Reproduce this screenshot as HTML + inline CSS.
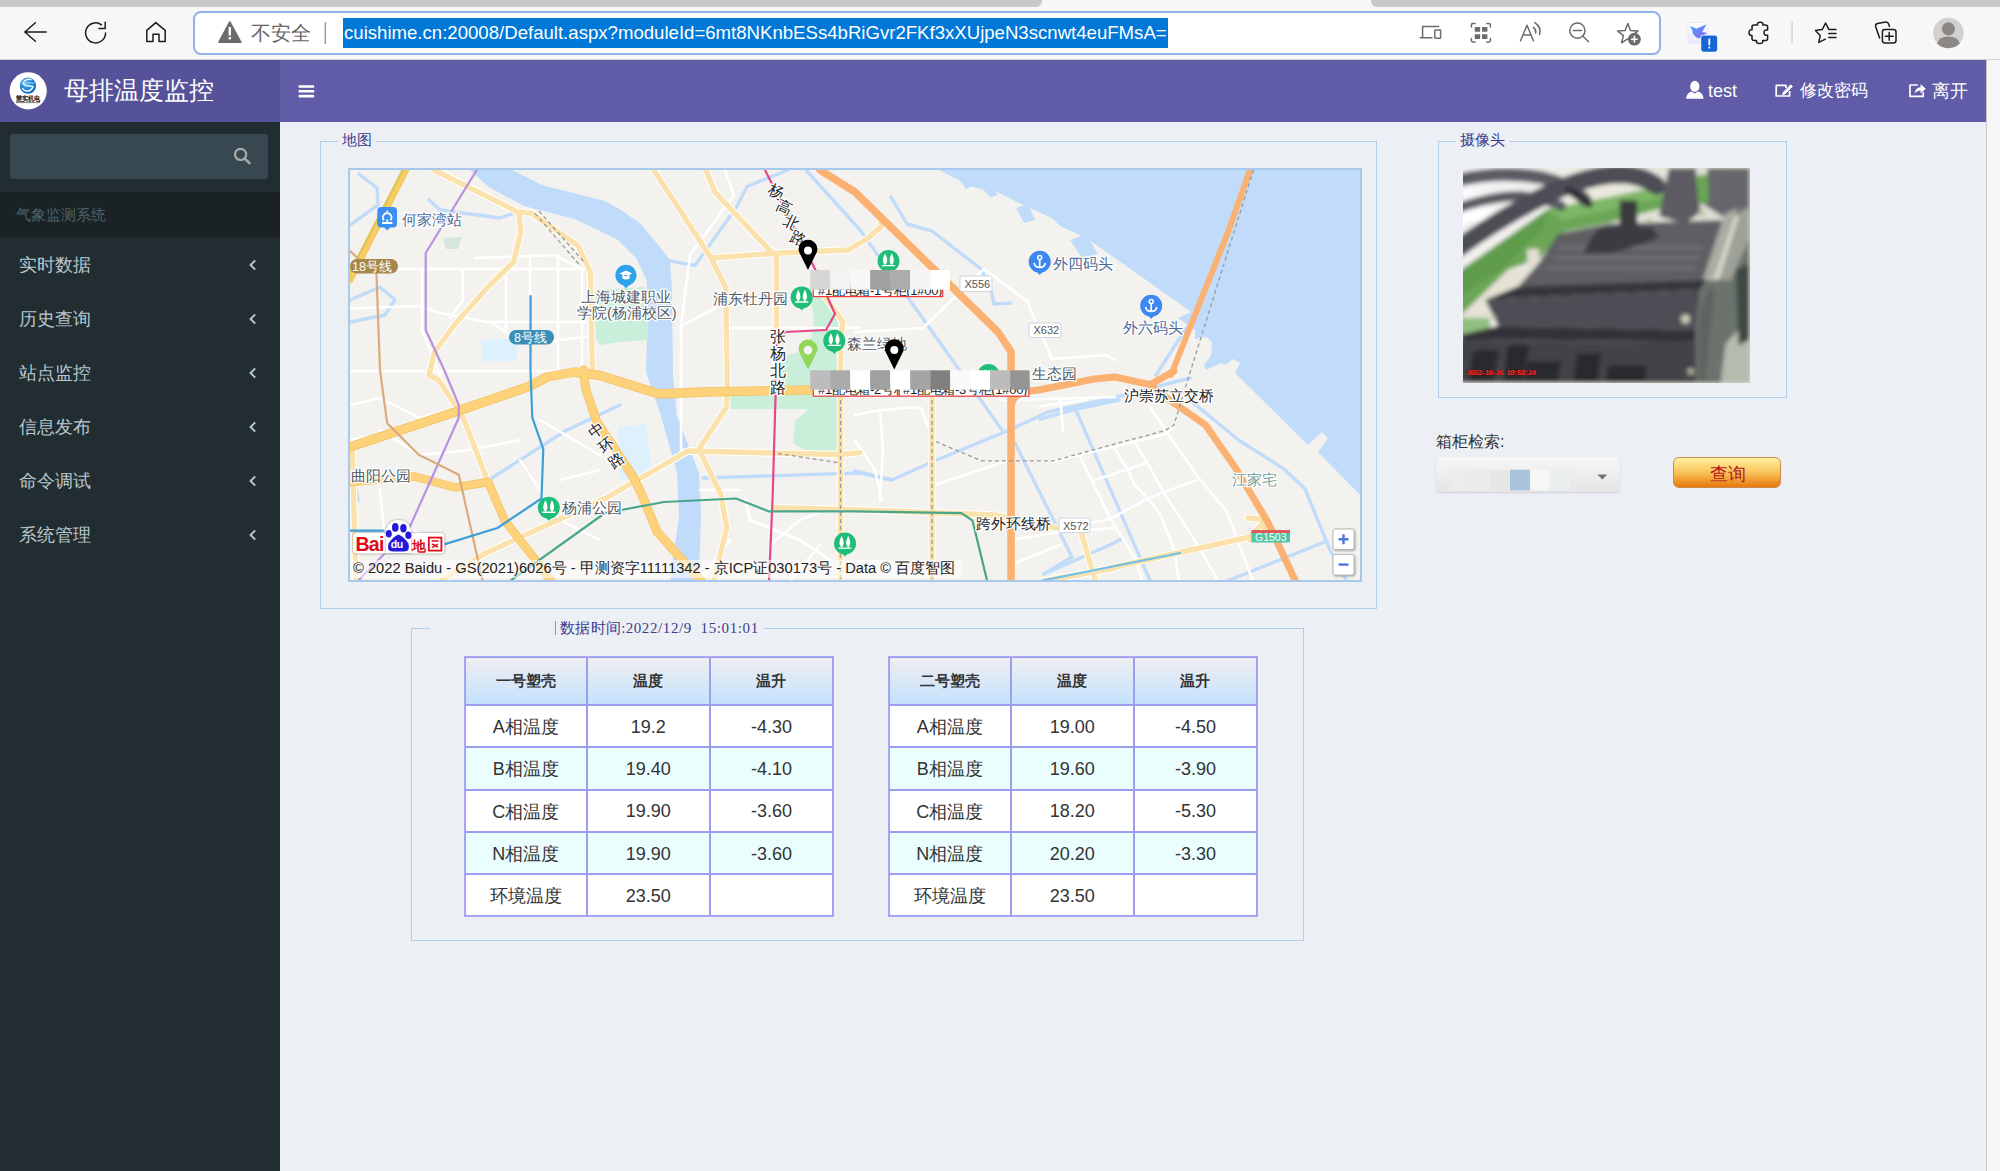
<!DOCTYPE html>
<html><head><meta charset="utf-8">
<style>
*{box-sizing:border-box}
html,body{margin:0;padding:0}
body{width:2000px;height:1171px;overflow:hidden;position:relative;background:#ecf0f5;font-family:"Liberation Sans",sans-serif;color:#333}
.abs{position:absolute}
/* browser chrome */
#tabs{left:0;top:0;width:2000px;height:8px;background:#f7f7f7}
#tab1{left:0;top:0;width:1042px;height:7px;background:#c9c9c9;border-bottom-right-radius:6px}
#tab2{left:1371px;top:0;width:629px;height:7px;background:#c9c9c9;border-bottom-left-radius:6px}
#toolbar{left:0;top:7px;width:2000px;height:53px;background:#f7f7f7}
#addr{left:193px;top:11px;width:1468px;height:44px;border:2.5px solid #8fb2e8;border-radius:8px;background:#fff}
#url{left:343px;top:18px;height:30px;background:#0078d7;color:#fff;font-size:18.6px;line-height:30px;white-space:nowrap;padding:0 1px}
.ico{position:absolute}
/* header */
#logo{left:0;top:60px;width:280px;height:62px;background:#555299}
#navbar{left:280px;top:60px;width:1706px;height:62px;background:#605ca8}
#rstrip{left:1986px;top:60px;width:14px;height:1111px;background:#f7f7f7;border-left:1.5px solid #c8c8c8}
/* sidebar */
#sidebar{left:0;top:122px;width:280px;height:1049px;background:#222d32}
#sform{left:10px;top:134px;width:258px;height:45px;background:#374850;border-radius:3px}
#shead{left:0;top:192px;width:280px;height:45px;background:#1a2226;color:#4b646f;font-size:15px;line-height:45px;padding-left:16px}
.mi{position:absolute;left:19px;width:250px;color:#b8c7ce;font-size:17.5px;height:30px;line-height:30px}
.mi svg{position:absolute;left:230px;top:9px}
/* content */
fieldset{position:absolute;margin:0;padding:0;border:1.25px solid #b3cdf0}
.legend{position:absolute;font-family:"Liberation Serif",serif;color:#3c3c8c;background:#ecf0f5;font-size:15px;line-height:17px}
table.t{position:absolute;border-collapse:separate;border-spacing:0;border:1.25px solid #a9a9f5;table-layout:fixed}
table.t td{border:1.25px solid #9c9cf0;text-align:center;font-size:18px;color:#333;padding:2px 0 0 0;height:42.3px}
table.t tr.h td{background:linear-gradient(#f0eef3,#c3e2fb);font-weight:bold;font-size:14.8px;height:48px;padding:1px 0 0 0}
table.t tr.w td{background:#fff}
table.t tr.c td{background:#ebfefe}
</style></head><body>
<!-- browser chrome -->
<div class="abs" id="tabs"></div>
<div class="abs" id="tab1"></div>
<div class="abs" id="tab2"></div>
<div class="abs" id="toolbar"></div>
<div class="abs" style="left:0;top:59px;width:2000px;height:1px;background:#d6d4ce"></div>
<div class="abs" id="addr"></div>

<svg class="abs" style="left:0;top:0" width="2000" height="60" viewBox="0 0 2000 60">
 <g fill="none" stroke="#1c1c1c" stroke-width="1.5" stroke-linecap="round" stroke-linejoin="round">
  <path d="M35.4 22.8 L24.8 32 L35.4 41.2 M24.8 32 H46.2"/>
  <path d="M105.6 33 A10 10 0 1 1 101.5 24.8"/>
  <path d="M105.2 22.2 V28.6 H99"/>
  <path d="M155.8 22.6 L146.8 30.4 V41.6 H153 V34.2 H159 V41.6 H165.2 V30.4 Z"/>
 </g>
 <g fill="#6b6b6b" stroke="none">
  <path d="M219 42.2 L229.8 22 L240.8 42.2 Z" stroke="#6b6b6b" stroke-width="1.6" stroke-linejoin="round"/>
 </g>
 <rect x="228.6" y="27" width="2.4" height="8.5" fill="#fff"/>
 <rect x="228.6" y="37" width="2.4" height="2.4" fill="#fff"/>
 <rect x="324.6" y="22" width="1.5" height="22" fill="#9a9a9a"/>
 <g fill="none" stroke="#6b6b6b" stroke-width="1.5" stroke-linecap="round" stroke-linejoin="round">
  <path d="M1438.6 26.4 H1422.6 V37.4 M1420.4 37.8 H1432"/>
  <rect x="1434.8" y="30" width="5.8" height="8.2" rx="0.6"/>
  <path d="M1471.4 27 V24.8 Q1471.4 23.4 1472.8 23.4 H1475 M1486.8 23.4 H1489 Q1490.4 23.4 1490.4 24.8 V27 M1490.4 38.6 V40.6 Q1490.4 42 1489 42 H1486.8 M1475 42 H1472.8 Q1471.4 42 1471.4 40.6 V38.6"/>
  <path d="M1520.6 40.8 L1527 25.2 L1533.4 40.8 M1522.6 35 H1531.4"/>
  <path d="M1533.4 27.4 Q1536.6 30 1535.6 33 M1534.8 22.6 Q1541.6 27 1539.6 34.6"/>
  <circle cx="1577.4" cy="30.6" r="7.6"/>
  <path d="M1573.4 30.6 H1581.4 M1583 36.2 L1588.6 41.8"/>
  <path d="M1627.8 23.4 L1630.5 30.5 L1638.1 30.9 L1632.2 35.6 L1634.1 42.9 L1627.8 38.8 L1621.5 42.9 L1623.4 35.6 L1617.5 30.9 L1625.1 30.5 Z"/>
 </g>
 <g fill="#6b6b6b">
  <rect x="1474.8" y="27" width="5.4" height="4.8" rx="0.6"/><rect x="1482" y="27" width="5.4" height="4.8" rx="0.6"/>
  <rect x="1474.8" y="34.2" width="5.4" height="4.8" rx="0.6"/><rect x="1482" y="34.2" width="5.4" height="4.8" rx="0.6"/>
  <circle cx="1634.4" cy="39.2" r="6.4"/>
 </g>
 <path d="M1634.4 35.8 V42.6 M1631 39.2 H1637.8" stroke="#fff" stroke-width="1.6"/>
 <!-- extensions -->
 <defs><linearGradient id="brd" x1="0" y1="0" x2="1" y2="1"><stop offset="0" stop-color="#45a8fa"/><stop offset="1" stop-color="#8d62f4"/></linearGradient>
 <linearGradient id="sqb" x1="0" y1="0" x2="0" y2="1"><stop offset="0" stop-color="#ffffff"/><stop offset="1" stop-color="#e6e9fa"/></linearGradient></defs>
 <rect x="1688" y="22.6" width="20" height="20.8" rx="2.2" fill="url(#sqb)" stroke="#e3e6ef" stroke-width="0.8"/>
 <path d="M1689.2 26.3 Q1693 26.6 1696.4 28.7 L1706.6 24.2 L1702.2 32.1 L1707.3 33.1 Q1703 35 1699.1 38.6 Q1692.4 36.4 1692.3 30.6 Q1691.4 27.8 1689.2 26.3 Z" fill="url(#brd)"/>
 <rect x="1700.6" y="34.8" width="17.2" height="17.4" rx="3" fill="#ffffff"/>
 <rect x="1701.2" y="35.4" width="16" height="16.4" rx="2.4" fill="#1766d6"/>
 <rect x="1708.4" y="38.6" width="1.8" height="6.6" fill="#fff"/><rect x="1708.4" y="46.6" width="1.8" height="1.8" fill="#fff"/>
 <g fill="none" stroke="#1c1c1c" stroke-width="1.5" stroke-linejoin="round" stroke-linecap="round">
  <path d="M1752 27 Q1752 25 1754 25 H1757.6 Q1756.6 22.2 1760.2 22.2 Q1763.8 22.2 1762.8 25 H1765.6 Q1767.6 25 1767.6 27 V30 Q1764 29.4 1764 32.6 Q1764 35.8 1767.6 35.2 V38.6 Q1767.6 40.6 1765.6 40.6 H1762.6 Q1763.6 43.4 1759.6 43.4 Q1755.6 43.4 1756.6 40.6 H1754 Q1752 40.6 1752 38.6 V35.4 Q1749 35.8 1749 32.6 Q1749 29.4 1752 29.8 Z"/>
  <path d="M1836 29.4 H1828.8 L1825.6 23 L1822.2 29.6 L1815.4 30.4 L1820.2 35.6 L1818.8 42.4 L1825.4 39.2"/>
  <path d="M1828.8 33.6 H1836 M1828.8 37.6 H1836"/>
  <path d="M1879.6 38 L1875.6 26.4 Q1875.2 24 1877.6 23.4 L1885.6 22 Q1888 21.8 1888.8 24.2 L1889.4 26.4"/>
  <rect x="1882.4" y="29.4" width="13.6" height="13.6" rx="2.4"/>
  <path d="M1889.2 32.4 V40.2 M1885.2 36.2 H1893.2"/>
 </g>
 <rect x="1791.4" y="21.8" width="1.4" height="21.6" fill="#d0d0d0"/>
 <circle cx="1948.4" cy="33" r="15.2" fill="#d1d0ce"/>
 <circle cx="1948.4" cy="28.8" r="6.6" fill="#8b8784"/>
 <path d="M1937 43.6 Q1939 36.6 1948.4 36.6 Q1957.8 36.6 1959.8 43.6 Q1955 48.2 1948.4 48.2 Q1941.8 48.2 1937 43.6 Z" fill="#8b8784"/>
</svg>
<div class="abs" style="left:251px;top:19px;font-size:19.5px;color:#666;line-height:28px">不安全</div>
<div class="abs" id="url">cuishime.cn:20008/Default.aspx?moduleId=6mt8NKnbESs4bRiGvr2FKf3xXUjpeN3scnwt4euFMsA=</div>

<!-- header -->
<div class="abs" id="logo"></div>
<div class="abs" id="navbar"></div>
<div class="abs" id="rstrip"></div>
<svg class="abs" style="left:0;top:60px" width="1986" height="62" viewBox="0 60 1986 62">
 <defs><radialGradient id="glb" cx="0.4" cy="0.35" r="0.7"><stop offset="0" stop-color="#56b6f2"/><stop offset="0.6" stop-color="#1f7fd2"/><stop offset="1" stop-color="#1a5fb8"/></radialGradient></defs>
 <circle cx="28.2" cy="90.8" r="18.6" fill="#fff"/>
 <circle cx="28" cy="85.7" r="8.1" fill="url(#glb)"/>
 <path d="M31.6 79.6 Q26 78.6 23.6 82 Q22.4 84.6 26 85.6 L33 86.6 Q31 91.6 26 91 Q23 90.4 22.6 88" fill="none" stroke="#e8f6ff" stroke-width="1.5"/>
 <path d="M21 84 Q27 82.4 34.6 83" fill="none" stroke="#bfe6ff" stroke-width="0.8"/>
 <text x="15.7" y="101.2" font-size="7.2" font-weight="bold" fill="#1a1a1a" textLength="24.7" lengthAdjust="spacingAndGlyphs">慧实机电</text>
 <rect x="16" y="102.2" width="24" height="0.9" fill="#777"/>
 <g fill="#fff">
  <rect x="298.6" y="85.2" width="15.6" height="2.6" rx="0.6"/>
  <rect x="298.6" y="90" width="15.6" height="2.6" rx="0.6"/>
  <rect x="298.6" y="94.8" width="15.6" height="2.6" rx="0.6"/>
 </g>
 <g fill="#fff">
  <ellipse cx="1694.8" cy="86.4" rx="4.6" ry="5.6"/>
  <path d="M1686 98.8 Q1686.4 93 1691.4 91.4 L1694.8 93.6 L1698.2 91.4 Q1703.2 93 1703.6 98.8 Z"/>
 </g>
 <g fill="none" stroke="#fff" stroke-width="1.7" stroke-linejoin="round">
  <path d="M1786 88 V85.4 H1776.2 V96 H1789.6 V91"/>
  <path d="M1783.2 92.4 L1790.8 84.8 L1792.4 86.4 L1784.8 94 L1782.6 94.6 Z" fill="#fff" stroke-width="1"/>
  <path d="M1917.8 85 H1910 V96.4 H1923.2 V92.2"/>
 </g>
 <path d="M1914.6 93.6 Q1915.2 87.4 1920.6 87.2 V84 L1925.8 88.8 L1920.6 93.4 V90.4 Q1916.6 90.6 1914.6 93.6 Z" fill="#fff"/>
</svg>
<div class="abs" style="left:64px;top:74px;font-size:24.5px;color:#fff;line-height:34px">母排温度监控</div>
<div class="abs" style="left:1708px;top:78px;font-size:18px;color:#fff;line-height:26px">test</div>
<div class="abs" style="left:1800px;top:78px;font-size:17px;color:#fff;line-height:26px">修改密码</div>
<div class="abs" style="left:1932px;top:78px;font-size:17.5px;color:#fff;line-height:26px">离开</div>

<!-- sidebar -->
<div class="abs" id="sidebar"></div>
<div class="abs" id="sform"></div>
<svg class="abs" style="left:230px;top:144px" width="24" height="24" viewBox="230 144 24 24">
 <circle cx="240.6" cy="154.4" r="5.6" fill="none" stroke="#a9a9a6" stroke-width="2.2"/>
 <path d="M244.6 158.4 L249.4 163.2" stroke="#a9a9a6" stroke-width="2.6" stroke-linecap="round"/>
</svg>
<div class="abs" id="shead">气象监测系统</div>
<div class="mi" style="top:250px">实时数据<svg width="8" height="12" viewBox="0 0 8 12"><path d="M6.2 1.4 L1.6 6 L6.2 10.6" fill="none" stroke="#b8c7ce" stroke-width="2"/></svg></div>
<div class="mi" style="top:304px">历史查询<svg width="8" height="12" viewBox="0 0 8 12"><path d="M6.2 1.4 L1.6 6 L6.2 10.6" fill="none" stroke="#b8c7ce" stroke-width="2"/></svg></div>
<div class="mi" style="top:358px">站点监控<svg width="8" height="12" viewBox="0 0 8 12"><path d="M6.2 1.4 L1.6 6 L6.2 10.6" fill="none" stroke="#b8c7ce" stroke-width="2"/></svg></div>
<div class="mi" style="top:412px">信息发布<svg width="8" height="12" viewBox="0 0 8 12"><path d="M6.2 1.4 L1.6 6 L6.2 10.6" fill="none" stroke="#b8c7ce" stroke-width="2"/></svg></div>
<div class="mi" style="top:466px">命令调试<svg width="8" height="12" viewBox="0 0 8 12"><path d="M6.2 1.4 L1.6 6 L6.2 10.6" fill="none" stroke="#b8c7ce" stroke-width="2"/></svg></div>
<div class="mi" style="top:520px">系统管理<svg width="8" height="12" viewBox="0 0 8 12"><path d="M6.2 1.4 L1.6 6 L6.2 10.6" fill="none" stroke="#b8c7ce" stroke-width="2"/></svg></div>

<!-- content -->
<fieldset style="left:320px;top:141px;width:1057px;height:468px"></fieldset>
<div class="legend" style="left:338px;top:132px;padding:0 4px">地图</div>
<div class="abs" style="left:348px;top:168px;width:1014px;height:414px;border:2px solid #a9c8ee;background:#f3f1ed;overflow:hidden" id="map">
<svg style="position:absolute;left:0;top:0" width="1010" height="410" viewBox="350 170 1010 410" font-family="Liberation Sans, sans-serif">
<rect x="350" y="170" width="1010" height="410" fill="#f4f2ee"/>
<!-- sea -->
<path fill="#c0dcfa" d="M939 170 H1360 V495 L1318 452 L1328 438 L1322 432 L1308 445 L1235 373 L1240 363 L1233 359 L1226 365 L1221 363 L1206 370 L1204 365 L1211 355 L1212 342 L1206 337 L1195 339 L1195 330 L1178 318 L1191 312 L1115 258 L1086 238 L1060 226 L1052 218 L1025 206 L997 192 L985 190 L970 186 Z"/>
<g fill="#c0dcfa">
 <path d="M957 176 L965 174 L973 186 L966 189 Z"/>
 <path d="M980 186 L990 184 L998 195 L990 197 Z"/>
 <path d="M1016 208 L1028 204 L1035 220 L1024 223 Z"/>
 <path d="M1070 240 L1086 234 L1098 254 L1082 258 Z"/>
</g>
<!-- river -->
<path fill="#c0dcfa" d="M470 170 L512 170 L542 185 L605 201 L621 210 L641 224 L659 246 L670 260 L672 290 L673 375 L677 416 L699 473 L701 513 L699 581 L670 581 L679 517 L677 473 L661 416 L646 372 L648 308 L646.6 280 L636 258 L618 240 L600 231 L574.5 219 L531.5 208 L524 206 L488 186.5 Z"/>
<path fill="#dcf1fc" d="M618 427 L646 424 L652 470 L640 482 L620 478 Z"/>
<path fill="#dcf1fc" d="M481 339 L517 339 L517 361 L481 361 Z"/>
<!-- parks -->
<g fill="#c9eed9">
 <path d="M592 290 L645 287 L648 340 L620 342 L600 345 L592 335 Z"/>
 <path d="M811 297 L827 297 L838 323 L840 453 L809 453 L793 443 L795 421 L809 409 L730 409 L730 396 L780 390 L780 357 L808 350 L814 323 Z"/>
 <path d="M443 238 L462 237 L458 249 L446 249 Z" fill="#d5e6de"/>
</g>
<!-- canals -->
<g fill="none" stroke="#c0dcfa" stroke-width="3.4" stroke-linejoin="round" stroke-linecap="round">
 <path d="M703 478 L860 473 L892 480 L932 462 L1007 431 L1048 412 L1115 397.5 L1190 378"/>
 <path d="M860 230 L806 170 M860 230 L1002 430 M1015 443 L1072 557 L1044 574"/>
 <path d="M891 197 L907 224 L932 231 L981 269 L991 290 L994 304 L1011 303"/>
 <path d="M788 170 L747 186.5 L736 208 L695 265.4 L654 258"/>
 <path d="M1191 401 L1238.5 440 L1284 469 L1305 489 L1330 550 L1347 581"/>
 <path d="M1156 375 L1185 330 L1195 318"/>
 <path d="M1044 574 L1115 542.6 L1121 539"/>
 <path d="M1227 581 L1327 541"/>
 <path d="M1076.3 411 L1150.5 581.6"/>
 <path d="M1040 419 L1074.7 409.5 L1119 400"/>
 <path d="M492 478 L565 431 L620 405"/>
 <path d="M359 174 L377 188 L378 205 L350 225"/>
 <path d="M429 200 L440 210 L500 218 L520 211"/>
 <path d="M350 460 L358 500"/>
 <path d="M350 300 L380 287 L395 300 L385 315 L350 322"/>
 <path d="M855 471 L892 480"/>
</g>
<!-- white minor roads -->
<g fill="none" stroke="#ffffff" stroke-width="2.6" stroke-linejoin="round" stroke-linecap="round">
 <path d="M350 269 L592 269 M350 308.5 L420 306 L436 312 L486 322 L592 322 M350 371 L592 371"/>
 <path d="M422 269 L422 330 L440 375 M463 269 L463 300 L450 318 M506 277 L506 330 M558 255 L558 375 M582 269 L582 375 M530 257 L530 296"/>
 <path d="M475 258 L555 255 L580 268"/>
 <path d="M491 322 L520 342 L545 342 L592 336"/>
 <path d="M725 170 L734 195 L690 255 L681 326 L681 375 L681 450 M681 326 L716 308 M730 328 L860 328"/>
 <path d="M984 269 L1027 301 L1052 359 L1106 355 L1115 360 M984 269 L923 328 L855 332"/>
 <path d="M350 405 L380 398 L420 418 L462 406 L510 390 M350 440 L380 435 M380 430 L420 455 L470 450 L520 440"/>
 <path d="M395 520 L430 540 M380 490 L385 540 M520 460 L560 520 L600 540 M540 420 L600 455 M560 480 L600 470"/>
 <path d="M681 450 L699 449 M700 490 L740 490 M745 498 L750 520 L800 540 L830 560 M770 545 L800 520 L840 505 M790 581 L820 545 M730 540 L700 581"/>
 <path d="M855 415 L880 410 L920 407 L935 441 M880 410 L883 450 L880 500 M855 440 L875 470 L882 500 M1000 400 L1050 399 L1115 397"/>
 <path d="M1010 540 L1060 532 L1115 528 M1010 565 L1060 545 M935 485 L980 470 L1010 460"/>
 <path d="M1052.6 461.6 L1166.3 434 L1174 427"/>
 <path d="M1079.5 455.3 L1109.5 516.9 L1134.8 557.9 L1142.7 581.6"/>
 <path d="M1114.2 447.4 L1128.4 471 L1134.8 485.3 L1147.4 497.9 L1160 513.7 L1174.2 550 L1179 581.6"/>
 <path d="M1134.8 442.6 L1147.4 463.2 L1163.2 491.6 L1197.9 545.3 L1218.5 581.6"/>
 <path d="M1147.4 403.2 L1166.3 431.6 L1199.5 479 L1226.4 510.6 L1253.2 581.6"/>
 <path d="M1093.7 480.5 L1145.8 463.2 M1090.5 523.2 L1111 518.4 L1149 497.9 L1199.5 479"/>
 <path d="M1060.5 400 L1063 431.6 M1040 406.3 L1087.4 400"/>
</g>
<!-- pale casing -->
<g fill="none" stroke-linejoin="round" stroke-linecap="round">
 <g stroke="#ffffff" stroke-width="7.4">
  <path d="M434 170 L517 211.6 L531.5 213.4 L578 245.7 L590.6 272.6 L592.4 375"/>
  <path d="M519 213 L520.7 233 L513.5 262 L488 287 L456 323 L434.7 351.5 L429 375 L438.6 380 L462.5 416 L488 482"/>
  <path d="M653.8 170 L711 258 L725.5 287 L727.3 375 L726.7 406.7 L699 449 L721 495 L726.7 528 L713.8 581"/>
  <path d="M705.8 170 L714.8 192 L770.3 251 M711 258 L780 253 L848 250 L867 239 L882 226 L880 218"/>
  <path d="M776.6 256 L776.6 390"/>
  <path d="M822 292 L843 322 L840.5 340 L840.5 581"/>
  <path d="M932 392 L932 581"/>
  <path d="M440 581 L484.5 553.6 L605 498.5 L688 451 L838.7 454.5 L860 452.6"/>
  <path d="M774 507.7 L855 509.6 L994.6 515 L1057 528"/>
  <path d="M1110 568 L1249.6 537 L1264 522 M1044 581 L1115 568"/>
  <path d="M1081 531.6 L1095.5 581"/>
  <path d="M352.3 450.8 L356 581"/>
  <path d="M1248 518 L1268 520 L1262 536 L1250 540"/>
 </g>
</g>
<!-- pale yellow roads -->
<g fill="none" stroke-linejoin="round" stroke-linecap="round">
 <g stroke="#fbe2ad" stroke-width="5.4">
  <path d="M434 170 L517 211.6 L531.5 213.4 L578 245.7 L590.6 272.6 L592.4 375"/>
  <path d="M519 213 L520.7 233 L513.5 262 L488 287 L456 323 L434.7 351.5 L429 375 L438.6 380 L462.5 416 L488 482"/>
  <path d="M653.8 170 L711 258 L725.5 287 L727.3 375 L726.7 406.7 L699 449 L721 495 L726.7 528 L713.8 581"/>
  <path d="M705.8 170 L714.8 192 L770.3 251 M711 258 L780 253 L848 250 L867 239 L882 226 L880 218"/>
  <path d="M776.6 256 L776.6 390"/>
  <path d="M822 292 L843 322 L840.5 340 L840.5 581"/>
  <path d="M932 392 L932 581"/>
  <path d="M440 581 L484.5 553.6 L605 498.5 L688 451 L838.7 454.5 L860 452.6"/>
  <path d="M774 507.7 L855 509.6 L994.6 515 L1057 528"/>
  <path d="M1110 568 L1249.6 537 L1264 522 M1044 581 L1115 568"/>
  <path d="M1081 531.6 L1095.5 581"/>
  <path d="M352.3 450.8 L356 581"/>
  <path d="M1248 518 L1268 520 L1262 536 L1250 540"/>
 </g>
</g>
<!-- main casing -->
<g fill="none" stroke="#f3c15e" stroke-linejoin="round" stroke-linecap="round">
 <path stroke-width="9.4" d="M350 447 L455 412 L529 386.5 L547 377 L574.5 372 L600 375.5 L659 394 L703 392 L811 390 L1012 390"/>
 <path stroke-width="8.9" d="M583.7 370 L585.5 388.4 L596.6 421.4 L633 476.5 L642 495 L657 531.6 L701 581"/>
 <path stroke-width="8.4" d="M350 482 L414.8 476.5 L455 487.5 L488.2 482 L504.7 520.6 L537.8 562.8 L551 581"/>
 <path stroke-width="6.4" d="M406 170 L350 280"/>
 <path stroke-width="2.8" d="M403 170 L348 277"/>
</g>
<!-- main yellow roads -->
<g fill="none" stroke="#fdd27b" stroke-linejoin="round" stroke-linecap="round">
 <path stroke-width="8" d="M350 447 L455 412 L529 386.5 L547 377 L574.5 372 L600 375.5 L659 394 L703 392 L811 390 L1012 390"/>
 <path stroke-width="7.5" d="M583.7 370 L585.5 388.4 L596.6 421.4 L633 476.5 L642 495 L657 531.6 L701 581"/>
 <path stroke-width="7" d="M350 482 L414.8 476.5 L455 487.5 L488.2 482 L504.7 520.6 L537.8 562.8 L551 581"/>
 <path stroke-width="5" d="M406 170 L350 280" stroke="#f7cd62"/>
 <path stroke-width="1.4" d="M403 170 L348 277" stroke="#d2c552"/>
</g>
<!-- orange expressways -->
<g fill="none" stroke="#fbb172" stroke-linejoin="round" stroke-linecap="round">
 <path stroke-width="7.6" d="M820 170 L855 192 L998 332 L1011 351.5 L1011 581"/>
 <path stroke-width="7" d="M1012 403 Q1014 392 1038.6 390 L1094 379 L1115 377 L1150 384.7 L1174 371"/>
 <path stroke-width="6" d="M1171 375 L1228.3 231.3 L1250 170"/>
 <path stroke-width="7" d="M1150 384.7 L1168.8 399.4 L1205.5 425 L1235 467.3 L1268 522.4 L1295.5 581"/>
</g>
<!-- dashed rail -->
<g fill="none" stroke="#9a9a9a" stroke-width="1.3" stroke-dasharray="4 3">
 <path d="M535 213.4 L580 265.4 M539 211 L584 262"/>
 <path d="M935.8 441.6 L981.7 460.9 L1053.3 460.9 L1110 445.3 L1165 430.6 L1174 425 L1190.8 370 L1253.4 170"/>
 <path d="M840.5 400 L840.5 581 M932 400 L932 581"/>
 <path d="M778 453.5 L838.7 462.7"/>
</g>
<!-- metro lines -->
<g fill="none" stroke-width="2.2" stroke-linejoin="round" stroke-linecap="round">
 <path stroke="#b991e2" d="M476.8 170 L425.7 253 L425.7 330 L444.2 370 L458.8 405 L458.8 417.7 L409.3 528 L357.9 581"/>
 <path stroke="#d9ab7c" d="M376.4 272.6 L380 370 L387.2 423.3 L418.4 454.5 L458.8 474.7 L482.7 581"/>
 <path stroke="#d9ab7c" d="M350 251 L362 262"/>
 <path stroke="#3d9fd8" d="M530.6 296 L530.5 370 L532.3 417.7 L543.3 449 L541.5 498.5 L497.4 528 L444.2 544.4 M350.5 530.7 L383.6 530.7"/>
 <path stroke="#e2488a" d="M765 170 L815 269 L835 314 L826 330 L785 332 L777.5 339 L776.3 370 L772.6 498.5 L769 581"/>
 <path stroke="#4aa68b" d="M510 581 L605 513 L664 502 L736 498.5 L769 511.4 L855 511.4 L961.5 513.2 L972.5 520.6 L987.2 581"/>
 <path stroke="#70c0ea" d="M1040 581 L1180 553"/>
</g>
<!-- badges -->
<rect x="350" y="259" width="48" height="14.5" rx="7" fill="#a88749"/>
<text x="352" y="271" font-size="12.5" fill="#fff">18号线</text>
<rect x="509" y="330" width="45" height="14.5" rx="7" fill="#3a8fb7"/>
<text x="514" y="342" font-size="12.5" fill="#fff">8号线</text>
<g font-size="11" fill="#555">
 <rect x="960" y="276" width="32" height="15.5" rx="2" fill="#fff" stroke="#cdd5e0" stroke-width="1"/>
 <text x="964.5" y="287.8">X556</text>
 <rect x="1029" y="323" width="32" height="14.5" rx="2" fill="#fff" stroke="#cdd5e0" stroke-width="1"/>
 <text x="1033.5" y="334.4">X632</text>
 <rect x="1059" y="518" width="31" height="14.5" rx="2" fill="#fff" stroke="#cdd5e0" stroke-width="1"/>
 <text x="1063" y="529.6">X572</text>
</g>
<rect x="1251.4" y="530" width="38.6" height="12.6" rx="1.5" fill="#4cc5a5"/>
<rect x="1251.4" y="530" width="38.6" height="3" fill="#e05a5a"/>
<text x="1255" y="541.4" font-size="10.5" fill="#fff">G1503</text>
<!-- POI icons -->
<g>
 <rect x="377.3" y="207" width="19.7" height="20.6" rx="4" fill="#3b8ef2"/>
 <path d="M384 227 L387.2 230.6 L390.4 227 Z" fill="#3b8ef2"/>
 <path d="M384 220.4 A4.3 4.3 0 1 1 390.4 220.4 M387.2 219.6 V222.6 M382 223 H392.4" stroke="#fff" stroke-width="1.8" fill="none"/><circle cx="387.2" cy="211.6" r="1" fill="#fff"/>
 <circle cx="626" cy="275.3" r="10.6" fill="#2fa3ea"/>
 <path d="M622.6 284.6 L626 288.6 L629.4 284.6 Z" fill="#2fa3ea"/>
 <path d="M619.6 273.4 L626 270.4 L632.4 273.4 L626 276.4 Z M622.4 275.2 V278.4 Q626 280.4 629.6 278.4 V275.2" fill="#fff"/>
</g>
<g id="parkicons">
 <g transform="translate(888.5 261)"><circle r="11" fill="#1fbd78"/><path d="M-3 9.6 L0 13.2 L3 9.6 Z" fill="#1fbd78"/><path d="M-3.4 -6 Q-6.4 0 -3.4 3 Q-0.6 0 -3.4 -6 Z M3.2 -6 Q0.4 0 3.2 3 Q6 0 3.2 -6 Z M-6.6 4.6 H6.6" fill="#fff" stroke="#fff" stroke-width="1.4"/></g>
 <g transform="translate(801.7 297.4)"><circle r="11" fill="#1fbd78"/><path d="M-3 9.6 L0 13.2 L3 9.6 Z" fill="#1fbd78"/><path d="M-3.4 -6 Q-6.4 0 -3.4 3 Q-0.6 0 -3.4 -6 Z M3.2 -6 Q0.4 0 3.2 3 Q6 0 3.2 -6 Z M-6.6 4.6 H6.6" fill="#fff" stroke="#fff" stroke-width="1.4"/></g>
 <g transform="translate(834.3 340.8)"><circle r="11" fill="#1fbd78"/><path d="M-3 9.6 L0 13.2 L3 9.6 Z" fill="#1fbd78"/><path d="M-3.4 -6 Q-6.4 0 -3.4 3 Q-0.6 0 -3.4 -6 Z M3.2 -6 Q0.4 0 3.2 3 Q6 0 3.2 -6 Z M-6.6 4.6 H6.6" fill="#fff" stroke="#fff" stroke-width="1.4"/></g>
 <g transform="translate(988.5 375)"><circle r="11" fill="#1fbd78"/><path d="M-3.4 -6 Q-6.4 0 -3.4 3 Q-0.6 0 -3.4 -6 Z M3.2 -6 Q0.4 0 3.2 3 Q6 0 3.2 -6 Z" fill="#fff"/></g>
 <g transform="translate(548.8 507.7)"><circle r="11" fill="#1fbd78"/><path d="M-3 9.6 L0 13.2 L3 9.6 Z" fill="#1fbd78"/><path d="M-3.4 -6 Q-6.4 0 -3.4 3 Q-0.6 0 -3.4 -6 Z M3.2 -6 Q0.4 0 3.2 3 Q6 0 3.2 -6 Z M-6.6 4.6 H6.6" fill="#fff" stroke="#fff" stroke-width="1.4"/></g>
 <g transform="translate(845 543.5)"><circle r="11" fill="#1fbd78"/><path d="M-3 9.6 L0 13.2 L3 9.6 Z" fill="#1fbd78"/><path d="M-3.4 -6 Q-6.4 0 -3.4 3 Q-0.6 0 -3.4 -6 Z M3.2 -6 Q0.4 0 3.2 3 Q6 0 3.2 -6 Z M-6.6 4.6 H6.6" fill="#fff" stroke="#fff" stroke-width="1.4"/></g>
</g>
<g>
 <g transform="translate(1039.7 261.8)"><circle r="11" fill="#3c87f0"/><path d="M-3 9.6 L0 13.2 L3 9.6 Z" fill="#3c87f0"/><circle cy="-4.4" r="2" fill="none" stroke="#fff" stroke-width="1.5"/><path d="M0 -2.4 V5.6 M-5.6 1 Q-5 5.6 0 5.6 Q5 5.6 5.6 1" fill="none" stroke="#fff" stroke-width="1.7"/></g>
 <g transform="translate(1151.2 305.8)"><circle r="11" fill="#3c87f0"/><path d="M-3 9.6 L0 13.2 L3 9.6 Z" fill="#3c87f0"/><circle cy="-4.4" r="2" fill="none" stroke="#fff" stroke-width="1.5"/><path d="M0 -2.4 V5.6 M-5.6 1 Q-5 5.6 0 5.6 Q5 5.6 5.6 1" fill="none" stroke="#fff" stroke-width="1.7"/></g>
</g>
<!-- labels -->
<g font-size="14.5" stroke="#ffffff" stroke-width="2.6" stroke-linejoin="round" paint-order="stroke">
 <text x="401.5" y="225" fill="#4a6a9a">何家湾站</text>
 <text x="581" y="302" fill="#505a66">上海城建职业</text>
 <text x="577" y="318" fill="#505a66">学院(杨浦校区)</text>
 <text x="713" y="304" fill="#505a66">浦东牡丹园</text>
 <text x="847" y="348.5" fill="#505a66">森兰绿地</text>
 <text x="1053" y="269" fill="#4a6a9a">外四码头</text>
 <text x="1122.6" y="333.4" fill="#4a6a9a">外六码头</text>
 <text x="1031.9" y="379" fill="#505a66">生态园</text>
 <text x="1123.8" y="401" fill="#222">沪崇苏立交桥</text>
 <text x="1232" y="485" fill="#6f9c9a">江家宅</text>
 <text x="976" y="529" fill="#222">跨外环线桥</text>
 <text x="350.5" y="481" fill="#505a66">曲阳公园</text>
 <text x="562" y="513" fill="#505a66">杨浦公园</text>
 <g fill="#222" font-size="15.5">
  <text x="769" y="197" transform="rotate(25 776 190)">杨</text>
  <text x="777" y="213" transform="rotate(25 784 206)">高</text>
  <text x="784" y="228" transform="rotate(25 791 221)">北</text>
  <text x="791" y="244" transform="rotate(25 798 237)">路</text>
  <text x="770" y="342">张</text>
  <text x="770" y="359">杨</text>
  <text x="770" y="376">北</text>
  <text x="770" y="393">路</text>
  <text x="588" y="436" transform="rotate(-35 595 430)">中</text>
  <text x="598" y="451" transform="rotate(-35 605 445)">环</text>
  <text x="608" y="466" transform="rotate(-35 615 460)">路</text>
 </g>
</g>
<!-- markers -->
<g>
 <path d="M808 270 L800.6 255 A9.4 9.4 0 1 1 815.4 255 Z" fill="#000"/>
 <circle cx="808" cy="250.6" r="4" fill="#fff"/>
 <path d="M894.3 369.5 L886.9 354.5 A9.4 9.4 0 1 1 901.7 354.5 Z" fill="#000"/>
 <circle cx="894.3" cy="350.1" r="4" fill="#fff"/>
 <path d="M808 369.5 L800.4 354.5 A9.4 9.4 0 1 1 815.6 354.5 Z" fill="#8fd659"/>
 <circle cx="808" cy="350.1" r="4.4" fill="#f4f2ee"/>
</g>
<!-- blurred labels -->
<g>
 <rect x="813.3" y="282" width="129.4" height="14.6" fill="#fff" stroke="#ee3a3a" stroke-width="1.2"/>
 <rect x="813.3" y="382" width="86" height="14.2" fill="#fff" stroke="#ee3a3a" stroke-width="1.2"/>
 <rect x="899.3" y="382" width="129.5" height="14.2" fill="#fff" stroke="#ee3a3a" stroke-width="1.2"/>
 <defs>
  <clipPath id="c1"><rect x="814" y="282" width="128" height="14"/></clipPath>
  <clipPath id="c2"><rect x="814" y="382" width="85" height="13.6"/></clipPath>
  <clipPath id="c3"><rect x="900" y="382" width="128" height="13.6"/></clipPath>
 </defs>
 <g font-size="13" fill="#222">
  <text x="818" y="294.5" clip-path="url(#c1)" letter-spacing="-0.3">#1配电箱-1号柜(1#00)</text>
  <text x="818" y="394" clip-path="url(#c2)" letter-spacing="-0.3">#1配电箱-2号柜</text>
  <text x="903" y="394" clip-path="url(#c3)" letter-spacing="-0.3">#1配电箱-3号柜(1#00)</text>
 </g>
 <rect x="810.2" y="270" width="20" height="19.7" fill="#d6d6d6"/>
 <rect x="830.2" y="270" width="20" height="19.7" fill="#f3f3f3"/>
 <rect x="850.2" y="270" width="20" height="19.7" fill="#f7f7f7"/>
 <rect x="870.2" y="270" width="20" height="19.7" fill="#a0a0a0"/>
 <rect x="890.2" y="270" width="20" height="19.7" fill="#acacac"/>
 <rect x="910.2" y="270" width="20" height="19.7" fill="#f5f5f5"/>
 <rect x="930.2" y="270" width="19.8" height="19.7" fill="#ffffff"/>
 <rect x="810.2" y="370.3" width="20" height="19.4" fill="#bcbcbc"/>
 <rect x="830.2" y="370.3" width="20" height="19.4" fill="#aaaaaa"/>
 <rect x="850.2" y="370.3" width="20" height="19.4" fill="#ffffff"/>
 <rect x="870.2" y="370.3" width="20" height="19.4" fill="#a0a0a0"/>
 <rect x="890.2" y="370.3" width="20" height="19.4" fill="#ffffff"/>
 <rect x="910.2" y="370.3" width="20" height="19.4" fill="#a4a4a4"/>
 <rect x="930.2" y="370.3" width="20" height="19.4" fill="#808080"/>
 <rect x="950.2" y="370.3" width="20" height="19.4" fill="#fafafa"/>
 <rect x="970.2" y="370.3" width="20" height="19.4" fill="#ffffff"/>
 <rect x="990.2" y="370.3" width="20" height="19.4" fill="#bcbcbc"/>
 <rect x="1010.2" y="370.3" width="19.4" height="19.4" fill="#959595"/>
</g>
<!-- copyright band -->
<rect x="350" y="560" width="612" height="18" fill="#ffffff" opacity="0.55"/>
<text x="353" y="572.8" font-size="14.7" fill="#222">© 2022 Baidu - GS(2021)6026号 - 甲测资字11111342 - 京ICP证030173号 - Data © 百度智图</text>
<!-- baidu logo -->
<g>
 <rect x="353" y="533" width="91.5" height="20.6" rx="4" fill="#fff" style="filter:drop-shadow(0 0 1.2px rgba(0,0,0,.45))"/>
 <path d="M398.4 520 A 12 12 0 0 1 411 534 L 411 553 L 386 553 L 386 534 A 12 12 0 0 1 398.4 520 Z" fill="#fff" style="filter:drop-shadow(0 0 1.2px rgba(0,0,0,.45))"/>
 <text x="355.4" y="550.8" font-size="19.5" font-weight="bold" fill="#e00b17" letter-spacing="-0.6">Bai</text>
 <g fill="#2318dc">
  <ellipse cx="395.3" cy="527.4" rx="3.3" ry="4.4"/>
  <ellipse cx="403.4" cy="528.2" rx="3.2" ry="4.2"/>
  <ellipse cx="388.8" cy="533.8" rx="3" ry="3.8"/>
  <ellipse cx="408.3" cy="535.2" rx="3" ry="3.8"/>
  <path d="M398.4 534.4 Q392.4 537 388.6 543.6 Q386.2 551.6 393 551.6 L404 551.6 Q410.6 551.6 408.4 543.6 Q404.6 537 398.4 534.4 Z"/>
 </g>
 <text x="390.8" y="548.4" font-size="10.5" font-weight="bold" fill="#fff" letter-spacing="-0.4">du</text>
 <text x="412.4" y="550.6" font-size="13.6" font-weight="bold" fill="#e00b17">地</text>
 <rect x="428.8" y="537.6" width="12.6" height="13" fill="none" stroke="#e00b17" stroke-width="1.8"/>
 <path d="M431.6 541 H438.6 M432 544 L438 547 M438 544 L432 547.6" stroke="#e00b17" stroke-width="1.4" fill="none"/>
</g>
<!-- zoom control -->
<g>
 <rect x="1333" y="529" width="21" height="20.5" rx="2" fill="#fff" stroke="#b8b8b8" stroke-width="1" style="filter:drop-shadow(1px 1px 1px rgba(0,0,0,.3))"/>
 <path d="M1338.5 539.2 H1348.5 M1343.5 534.2 V544.2" stroke="#4d76dc" stroke-width="2.4"/>
 <rect x="1333" y="554.5" width="21" height="20.5" rx="2" fill="#fff" stroke="#b8b8b8" stroke-width="1" style="filter:drop-shadow(1px 1px 1px rgba(0,0,0,.3))"/>
 <path d="M1338.5 564.6 H1348.5" stroke="#4d76dc" stroke-width="2.4"/>
</g>
</svg>

</div>

<fieldset style="left:1438px;top:141px;width:349px;height:257px"></fieldset>
<div class="legend" style="left:1456px;top:132px;padding:0 4px">摄像头</div>
<div class="abs" id="cam" style="left:1463px;top:168px;width:287px;height:215px;background:#555;overflow:hidden">
<svg style="position:absolute;left:0;top:0" width="287" height="215" viewBox="0 0 287 215.5">
<defs>
 <filter id="bl" x="-5%" y="-5%" width="110%" height="110%"><feGaussianBlur stdDeviation="2"/></filter>
 <filter id="bl2" x="-50%" y="-50%" width="200%" height="200%"><feGaussianBlur stdDeviation="6"/></filter>
 <linearGradient id="bgc" x1="0" y1="0" x2="1" y2="0.3"><stop offset="0" stop-color="#f6f4fa"/><stop offset="0.45" stop-color="#ebe9df"/><stop offset="1" stop-color="#dcdbd0"/></linearGradient>
</defs>
<g filter="url(#bl)">
 <rect x="-5" y="-5" width="297" height="226" fill="url(#bgc)"/>
 <ellipse cx="8" cy="62" rx="22" ry="40" fill="#ffffff" filter="url(#bl2)"/>
 <!-- cream strip above green (left) -->
 <path d="M-5 58 L85 35 L100 40 L45 102 L-5 150 Z" fill="#f2f0ee"/>
 <!-- green bar -->
 <path d="M-5 104 L85 41 L146 29.4 L206 16.6 L250 10 L252 34 L196 41 L146 55 L101 64 L75.6 91 L45 102 L-5 150 Z" fill="#6aa655"/>
 <path d="M85 41 L146 29.4 L206 16.6 L250 10 L250 22 L196 30 L146 42 L100 52 Z" fill="#7db868"/>
 <path d="M-5 104 L85 41 L80 60 L40 100 L-5 130 Z" fill="#5f9c4c"/>
 <!-- cream beam lower-left -->
 <path d="M45 102 L72.5 102 L27 149 L-5 150 Z" fill="#e6e2d6"/>
 <path d="M64 81 L76 81 L76 112 L64 112 Z" fill="#e2dfd2"/>
 <path d="M-5 150 L26 150 L30 178 L-5 180 Z" fill="#8fbf7f"/>
 <!-- cables -->
 <g fill="none" stroke-linecap="round">
  <path d="M-5 12 Q40 2 80 10 Q108 17 122 32" stroke="#5c5c64" stroke-width="13"/>
  <path d="M-5 40 Q30 28 56 28 Q82 30 98 38" stroke="#5a5a62" stroke-width="10"/>
  <path d="M-5 80 Q40 48 85 26 Q118 10 146 7 Q176 4 194 18" stroke="#4e4e56" stroke-width="18"/>
  <path d="M105 22 Q116 26 126 36" stroke="#2e2e34" stroke-width="7"/>
 </g>
 <!-- top-right gray panels -->
 <path d="M206 0 L233 0 L238 44 L222 56 L196 48 Z" fill="#5c5c62"/>
 <path d="M245 0 L287 0 L287 44 L262 50 L240 36 Z" fill="#66666c"/>
 <path d="M233 8 L245 6 L246 34 L236 36 Z" fill="#6aa655"/>
 <!-- device top face -->
 <path d="M95 66 L146 56 L260 52 L244 112 L54 120 L75 96 Z" fill="#5e5e64"/>
 <g stroke="#86868a" stroke-width="2" opacity="0.7">
  <path d="M95 80 H240 M90 90 H236 M84 100 H232"/>
 </g>
 <!-- lever -->
 <path d="M156.6 32.4 L174.3 32.4 L174.3 67.7 L156.6 67.7 Z" fill="#3a3a3e"/>
 <path d="M137 60 Q160 56 190 60 L196 70 Q170 80 150 85 L120 86 L128 70 Z" fill="#3a3a40"/>
 <circle cx="186" cy="52" r="3" fill="#c8cca8"/>
 <circle cx="239" cy="45" r="3.5" fill="#c0c4a8"/>
 <!-- right rails -->
 <path d="M262 46 L275 40 L252 110 L240 112 Z" fill="#a9ada4"/>
 <path d="M278 42 L287 40 L287 70 L268 112 L256 112 Z" fill="#9da198"/>
 <!-- device front faces -->
 <path d="M54 119 L244 112 L238 122 L22 132 Z" fill="#36363b"/>
 <path d="M22 132 L238 122 L233 162.5 L35 158 Z" fill="#4e4e54"/>
 <path d="M35 158 L233 162.5 L233 174.6 L0 172.5 L-5 168 Z" fill="#333338"/>
 <path d="M-5 172.5 L233 174.6 L238 215.5 L-5 215.5 Z" fill="#434348"/>
 <!-- right side panel -->
 <path d="M244 112 L268 112 L287 70 L287 215.5 L233 215.5 L233 162.5 L238 122 Z" fill="#6c726c"/>
 <path d="M263 176 L287 150 L287 215.5 L258 215.5 Z" fill="#b5bcae"/>
 <path d="M273 102 L287 96 L287 172 L276 178 Z" fill="#3e4a44"/>
 <path d="M236 150 L246 120 L252 124 L242 215 L236 215 Z" fill="#5e6360"/>
 <!-- slots -->
 <g fill="#2a2a2e">
  <path d="M9 186 Q12 182 20 182 L36 183 L30 215.5 L5 215.5 Z"/>
  <path d="M44 180 Q48 176 56 177 L67 178 L58 215.5 L40 215.5 Z"/>
  <path d="M64 194 L98 194 L94 215.5 L60 215.5 Z"/>
  <path d="M114 186 L138 186 L134 215.5 L110 215.5 Z"/>
  <path d="M145 198 L184 198 L182 215.5 L143 215.5 Z"/>
 </g>
 <circle cx="222.7" cy="151.4" r="4.6" fill="#c8cbb5"/>
 <circle cx="228" cy="204" r="3.5" fill="#a8ab98"/>
 <circle cx="30" cy="150" r="2.5" fill="#c0c4b0"/>
</g>
<text x="3.6" y="207.6" font-family="Liberation Mono, monospace" font-size="8" font-weight="bold" fill="#f02828" stroke="#5a0000" stroke-width="0.5" paint-order="stroke" letter-spacing="-1.2">2022-10-26 10:58:24</text>
</svg>

</div>

<div class="abs" style="left:1436px;top:432px;font-size:16px;color:#333">箱柜检索:</div>
<div class="abs" style="left:1436px;top:457px;width:184px;height:35px;border-radius:4px;background:linear-gradient(#f6f6f6,#e5e5e5);box-shadow:0 1px 2px rgba(0,0,0,.12)"></div>
<svg class="abs" style="left:1436px;top:457px" width="184" height="36" viewBox="1436 457 184 36">
 <rect x="1449.4" y="469.7" width="20.2" height="20.6" fill="#ececec"/>
 <rect x="1469.6" y="469.7" width="20.2" height="20.6" fill="#ebebeb"/>
 <rect x="1489.8" y="469.7" width="20.2" height="20.6" fill="#e7e7e7"/>
 <rect x="1510" y="469.7" width="20.2" height="20.6" fill="#abc3da"/>
 <rect x="1530.2" y="469.7" width="20.2" height="20.6" fill="#f5f7f7"/>
 <rect x="1550.4" y="469.7" width="20" height="20.6" fill="#e9efef"/>
 <path d="M1597.4 474.4 H1607.2 L1602.3 479.4 Z" fill="#707070"/>
</svg>
<div class="abs" style="left:1673px;top:457px;width:108px;height:31px;border-radius:6px;border:1px solid #c98a4a;background:linear-gradient(#fdf49e,#f9c25a 50%,#e6780c);color:#b5161b;font-size:18px;line-height:29px;text-align:center;padding:2px 0 0 2px">查询</div>

<fieldset style="left:411px;top:628px;width:893px;height:313px"></fieldset>
<div class="legend" style="left:430px;top:620px;width:125px;height:16px"></div>
<div class="legend" style="left:554px;top:620px;padding:0 5px 0 1px;font-size:15px;line-height:17px"><span style="display:inline-block;width:1px;height:14px;background:#999;vertical-align:-2px;margin-right:4px"></span><span style="letter-spacing:0.3px">数据时间:</span><span style="letter-spacing:0.6px">2022/12/9&nbsp; 15:01:01</span></div>

<table class="t" style="left:464px;top:656px;width:370px">
<colgroup><col style="width:121.5px"><col style="width:123px"><col style="width:123px"></colgroup>
<tr class="h"><td>一号塑壳</td><td>温度</td><td>温升</td></tr>
<tr class="w"><td>A相温度</td><td>19.2</td><td>-4.30</td></tr>
<tr class="c"><td>B相温度</td><td>19.40</td><td>-4.10</td></tr>
<tr class="w"><td>C相温度</td><td>19.90</td><td>-3.60</td></tr>
<tr class="c"><td>N相温度</td><td>19.90</td><td>-3.60</td></tr>
<tr class="w"><td>环境温度</td><td>23.50</td><td></td></tr>
</table>
<table class="t" style="left:888px;top:656px;width:370px">
<colgroup><col style="width:121.5px"><col style="width:123px"><col style="width:123px"></colgroup>
<tr class="h"><td>二号塑壳</td><td>温度</td><td>温升</td></tr>
<tr class="w"><td>A相温度</td><td>19.00</td><td>-4.50</td></tr>
<tr class="c"><td>B相温度</td><td>19.60</td><td>-3.90</td></tr>
<tr class="w"><td>C相温度</td><td>18.20</td><td>-5.30</td></tr>
<tr class="c"><td>N相温度</td><td>20.20</td><td>-3.30</td></tr>
<tr class="w"><td>环境温度</td><td>23.50</td><td></td></tr>
</table>
</body></html>
